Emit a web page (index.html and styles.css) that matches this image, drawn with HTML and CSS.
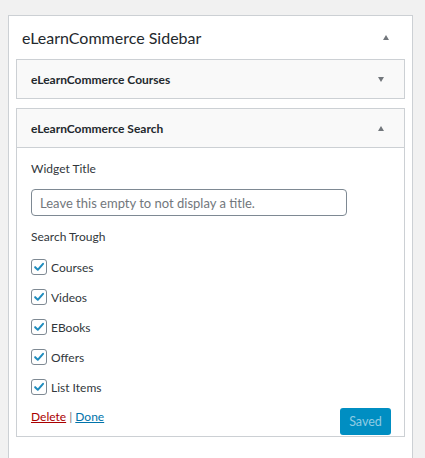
FILE: index.html
```html
<!DOCTYPE html>
<html>
<head>
<meta charset="utf-8">
<link rel="stylesheet" href="styles.css">
</head>
<body>
<div class="sidebar">
  <div class="sidebar-head">
    <h2 class="sidebar-title">eLearnCommerce Sidebar</h2>
    <span class="arrow up"></span>
  </div>
  <div class="widgets">
    <div class="widget closed">
      <div class="widget-head">
        <h3 class="widget-title">eLearnCommerce Courses</h3>
        <span class="arrow down"></span>
      </div>
    </div>
    <div class="widget open">
      <div class="widget-head">
        <h3 class="widget-title">eLearnCommerce Search</h3>
        <span class="arrow up"></span>
      </div>
      <div class="widget-body">
        <label class="field-label">Widget Title</label>
        <input class="text-input" type="text" placeholder="Leave this empty to not display a title.">
        <div class="field-label search-label">Search Trough</div>
        <ul class="checks">
          <li><span class="cb"><svg viewBox="0 0 16 16" width="16" height="16"><path d="M3.6 8.2 L6.6 11.2 L12.6 4.4" fill="none" stroke="#1e8cbe" stroke-width="2.3" stroke-linecap="round" stroke-linejoin="round"/></svg></span>Courses</li>
          <li><span class="cb"><svg viewBox="0 0 16 16" width="16" height="16"><path d="M3.6 8.2 L6.6 11.2 L12.6 4.4" fill="none" stroke="#1e8cbe" stroke-width="2.3" stroke-linecap="round" stroke-linejoin="round"/></svg></span>Videos</li>
          <li><span class="cb"><svg viewBox="0 0 16 16" width="16" height="16"><path d="M3.6 8.2 L6.6 11.2 L12.6 4.4" fill="none" stroke="#1e8cbe" stroke-width="2.3" stroke-linecap="round" stroke-linejoin="round"/></svg></span>EBooks</li>
          <li><span class="cb"><svg viewBox="0 0 16 16" width="16" height="16"><path d="M3.6 8.2 L6.6 11.2 L12.6 4.4" fill="none" stroke="#1e8cbe" stroke-width="2.3" stroke-linecap="round" stroke-linejoin="round"/></svg></span>Offers</li>
          <li><span class="cb"><svg viewBox="0 0 16 16" width="16" height="16"><path d="M3.6 8.2 L6.6 11.2 L12.6 4.4" fill="none" stroke="#1e8cbe" stroke-width="2.3" stroke-linecap="round" stroke-linejoin="round"/></svg></span>List Items</li>
        </ul>
        <div class="actions">
          <div class="links"><a class="del" href="#">Delete</a> <span class="sep">|</span> <a class="done" href="#">Done</a></div>
          <button class="saved" type="button">Saved</button>
        </div>
      </div>
    </div>
  </div>
</div>
</body>
</html>
```
FILE: styles.css
```css
html, body {
  margin: 0;
  padding: 0;
  background: #f1f1f1;
  font-family: Lato, "Open Sans", sans-serif;
  color: #23282d;
}
body {
  height: 458px;
  overflow: hidden;
}
.sidebar {
  margin: 15px 0 0 8px;
  width: 405px;
  box-sizing: border-box;
  background: #fff;
  border: 1px solid #ccd0d4;
  height: 460px;
}
.sidebar-head {
  height: 43px;
  display: flex;
  align-items: center;
  justify-content: space-between;
  padding: 0 23px 0 13px;
}
.sidebar-title {
  margin: 0;
  font-size: 16px;
  font-weight: 400;
  color: #23282d;
}
.arrow {
  width: 0;
  height: 0;
  border-left: 3.5px solid transparent;
  border-right: 3.5px solid transparent;
}
.arrow.up { border-bottom: 5px solid #72777c; }
.arrow.down { border-top: 5px solid #72777c; }
.widgets {
  padding: 0 7px;
}
.widget {
  border: 1px solid #ccd0d4;
  background: #fff;
  margin-bottom: 9px;
}
.widget-head {
  height: 38px;
  display: flex;
  align-items: center;
  justify-content: space-between;
  padding: 0 20px 0 14px;
  background: #f9f9f9;
}
.widget.open .widget-head {
  border-bottom: 1px solid #ccd0d4;
}
.widget-title {
  margin: 0;
  font-size: 12px;
  font-weight: 700;
  color: #23282d;
}
.widget-body {
  padding: 12px 14px 12px 14px;
  height: 288px;
  box-sizing: border-box;
}
.field-label {
  display: block;
  font-size: 12px;
  color: #32373c;
  line-height: 18px;
}
.text-input {
  display: block;
  margin: 11px 0 12px;
  width: 316px;
  height: 27px;
  box-sizing: border-box;
  border: 1px solid #7e8993;
  border-radius: 4px;
  padding: 0 8px;
  font-family: inherit;
  font-size: 13px;
  color: #32373c;
}
.text-input::placeholder {
  color: #72777c;
  opacity: 1;
}
.checks {
  list-style: none;
  margin: 6px 0 0;
  padding: 0;
}
.checks li {
  display: flex;
  align-items: center;
  height: 30px;
  font-size: 12px;
  color: #32373c;
}
.cb {
  width: 14px;
  height: 14px;
  border: 1px solid #7e8993;
  border-radius: 3px;
  margin-right: 4px;
  display: flex;
  align-items: center;
  justify-content: center;
  box-sizing: content-box;
}
.cb svg { width: 14px; height: 14px; }
.actions {
  display: flex;
  justify-content: space-between;
  align-items: flex-start;
  margin-top: 5px;
}
.links {
  font-size: 12px;
  color: #72777c;
  margin-top: 2px;
}
.del { color: #a00; }
.done { color: #0073aa; }
.saved {
  margin-top: 1px;
  margin-right: -1px;
  width: 51px;
  height: 27px;
  border: 0;
  border-radius: 3px;
  background: #008ec2;
  color: #8fcbe3;
  font-family: inherit;
  font-size: 12.5px;
  padding: 0;
}
```
